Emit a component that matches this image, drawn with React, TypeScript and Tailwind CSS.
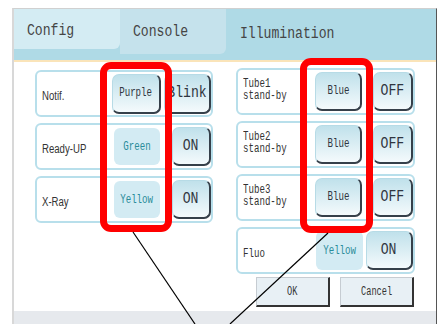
import React from 'react';

const mono = "font-['Liberation_Mono','DejaVu_Sans_Mono',monospace]";
const sans = "font-['Liberation_Sans',Arial,sans-serif]";

// raised button with dark right/bottom edge
const Raised: React.FC<{ className?: string; children: React.ReactNode }> = ({ className = '', children }) => (
  <div
    className={`flex shrink-0 items-center justify-center overflow-hidden rounded-[7px] border border-[#b7dbe6] border-r-2 border-b-2 border-r-[#36404a] border-b-[#36404a] bg-linear-to-b from-[#c0e1eb] to-[#f4fafc] text-[#2f3540] ${className}`}
  >
    {children}
  </div>
);

// selected (flat) value
const Flat: React.FC<{ className?: string; children: React.ReactNode }> = ({ className = '', children }) => (
  <div className={`flex shrink-0 items-center justify-center rounded-[6px] bg-[#d3ebf3] text-[#2a8c9a] ${className}`}>
    {children}
  </div>
);

const Small: React.FC<{ children: React.ReactNode }> = ({ children }) => (
  <span className={`inline-block scale-x-[0.76] text-[12px] leading-none ${mono}`}>{children}</span>
);

const Big: React.FC<{ children: React.ReactNode }> = ({ children }) => (
  <span className={`inline-block scale-x-[0.82] text-[16px] leading-none ${mono}`}>{children}</span>
);

const Row: React.FC<{ className?: string; children: React.ReactNode }> = ({ className = '', children }) => (
  <div className={`flex h-[47px] items-center rounded-[6px] border-2 border-[#b8dfeb] bg-white pl-[5px] ${className}`}>
    {children}
  </div>
);

const LeftLabel: React.FC<{ children: React.ReactNode }> = ({ children }) => (
  <div className="flex-1 text-[#333]">
    <span className={`inline-block origin-left scale-x-[0.8] text-[12px] leading-none ${sans}`}>{children}</span>
  </div>
);

const RightLabel: React.FC<{ children: React.ReactNode }> = ({ children }) => (
  <div className="flex-1 text-[#333]">
    <span className={`inline-block origin-left scale-x-[0.76] text-[12px] leading-[12px] whitespace-pre ${mono}`}>{children}</span>
  </div>
);

const Tab: React.FC<{ className?: string; children: React.ReactNode }> = ({ className = '', children }) => (
  <div className={`flex items-center ${className}`}>
    <span className={`inline-block origin-left scale-x-[0.82] text-[16px] leading-none text-[#454545] ${mono}`}>{children}</span>
  </div>
);

export default function App() {
  return (
    <div className="relative h-[324px] w-[439px] overflow-hidden bg-white">
      <div className="ml-[12px] mt-[8px] flex h-[316px] w-[425px] flex-col border-l-2 border-t border-r border-l-[#d8d8d8] border-t-[#d0d0d0] border-r-[#555]">
        {/* Tabs */}
        <div className="flex h-[51px] items-start bg-[#afdae6]">
          <Tab className="h-[40px] w-[106px] rounded-br-[6px] bg-[#d4ecf3] pl-[13px] pt-[4px]">Config</Tab>
          <Tab className="h-[45px] w-[106px] rounded-br-[6px] bg-[#c5e2ec] pl-[13px]">Console</Tab>
          <Tab className="h-[47px] flex-1 pl-[14px] pt-[2px]">Illumination</Tab>
        </div>
        <div className="h-[2px] bg-[#fae4b9]" />

        {/* Content */}
        <div className="flex h-[249px] gap-[23px] bg-white pl-[21px]">
          <div className="mt-[8px] flex w-[178px] flex-col gap-[6px]">
            <Row>
              <LeftLabel>Notif.</LeftLabel>
              <Raised className="h-[40px] w-[49px]">
                <Small>Purple</Small>
              </Raised>
              <Raised className="ml-[3px] h-[40px] w-[47px]">
                <Big>Blink</Big>
              </Raised>
            </Row>
            <Row>
              <LeftLabel>Ready-UP</LeftLabel>
              <Flat className="h-[37px] w-[46px]">
                <Small>Green</Small>
              </Flat>
              <Raised className="ml-[12px] h-[39px] w-[39px]">
                <Big>ON</Big>
              </Raised>
            </Row>
            <Row>
              <LeftLabel>X-Ray</LeftLabel>
              <Flat className="h-[37px] w-[46px]">
                <Small>Yellow</Small>
              </Flat>
              <Raised className="ml-[12px] h-[39px] w-[39px]">
                <Big>ON</Big>
              </Raised>
            </Row>
          </div>

          <div className="mt-[6px] flex w-[179px] flex-col gap-[6px]">
            {['Tube1', 'Tube2', 'Tube3'].map((t) => (
              <Row key={t}>
                <RightLabel>{`${t}\nstand-by`}</RightLabel>
                <Raised className="h-[39px] w-[47px]">
                  <Small>Blue</Small>
                </Raised>
                <Raised className="ml-[11px] h-[39px] w-[40px]">
                  <Big>OFF</Big>
                </Raised>
              </Row>
            ))}
            <Row>
              <RightLabel>Fluo</RightLabel>
              <Flat className="h-[39px] w-[47px]">
                <Small>Yellow</Small>
              </Flat>
              <Raised className="ml-[3px] h-[39px] w-[47px]">
                <Big>ON</Big>
              </Raised>
            </Row>
            <div className="-mt-[3px] flex justify-end gap-[10px] pr-[1px]">
              {['OK', 'Cancel'].map((b) => (
                <div
                  key={b}
                  className="flex h-[30px] w-[74px] items-center justify-center border border-[#c6ccd2] border-r-2 border-b-2 border-r-[#333] border-b-[#333] bg-[#e8f0f5] text-[#333]"
                >
                  <span className={`inline-block scale-x-[0.72] text-[12px] leading-none ${mono}`}>{b}</span>
                </div>
              ))}
            </div>
          </div>
        </div>

        <div className="h-[13px] bg-[#e6e9ed]" />
      </div>

      {/* Annotations */}
      <div className="pointer-events-none absolute left-[100px] top-[62px] h-[170px] w-[72px] rounded-[11px] border-[7px] border-[#ff0000]" />
      <div className="pointer-events-none absolute left-[300px] top-[58px] h-[175px] w-[73px] rounded-[11px] border-[7px] border-[#ff0000]" />
      <svg className="pointer-events-none absolute inset-0" width="439" height="324" viewBox="0 0 439 324">
        <line x1="133" y1="232" x2="195" y2="324" stroke="#000" strokeWidth="1.2" />
        <line x1="328" y1="233" x2="230" y2="324" stroke="#000" strokeWidth="1.2" />
      </svg>
    </div>
  );
}
